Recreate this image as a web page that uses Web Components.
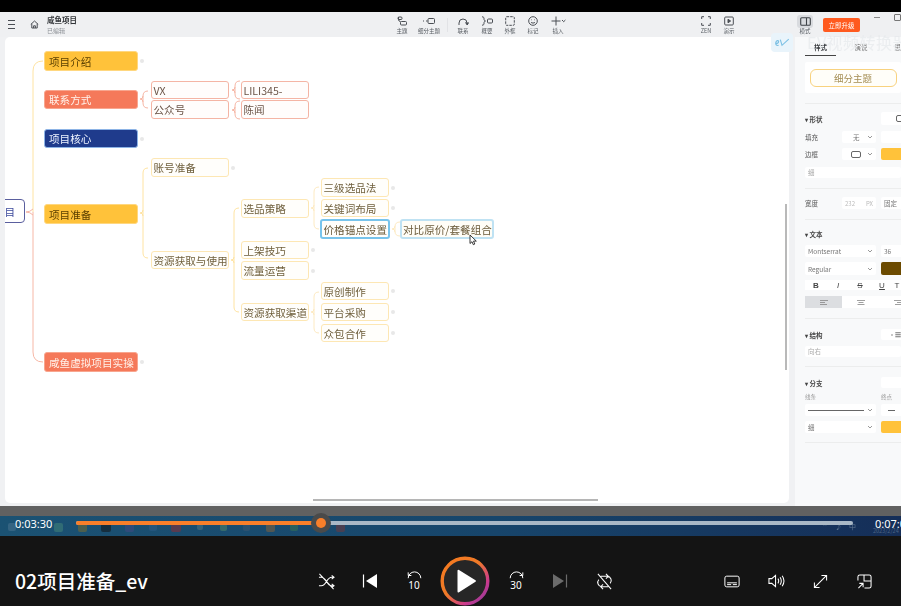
<!DOCTYPE html>
<html lang="zh">
<head>
<meta charset="utf-8">
<title>02项目准备_ev</title>
<style>
html, body { margin: 0; background: #000; }
body { width: 901px; height: 606px; overflow: hidden; font-family: "Noto Sans CJK SC", "Noto Sans", sans-serif; }
</style>
</head>
<body>

<app-window>
  <tool-bar slot="toolbar"></tool-bar>
  <mind-map slot="canvas">
    <map-node kind="root" x="-16" y="162" w="36" h="24">项目</map-node>
    <map-node kind="yellow" x="39" y="14" w="94" h="20" dot>项目介绍</map-node>
    <map-node kind="red" x="39" y="53" w="94" h="19">联系方式</map-node>
    <map-node kind="navy" x="39" y="92" w="94" h="19" dot>项目核心</map-node>
    <map-node kind="yellow" x="39" y="167" w="94" h="20">项目准备</map-node>
    <map-node kind="red" x="39" y="315" w="94" h="20" dot>咸鱼虚拟项目实操</map-node>
    <map-node kind="redline" x="146" y="44" w="78" h="18">VX</map-node>
    <map-node kind="redline" x="146" y="63" w="78" h="19">公众号</map-node>
    <map-node kind="redline" x="236" y="44" w="68" h="18">LILI345-</map-node>
    <map-node kind="redline" x="236" y="63" w="68" h="19">陈闻</map-node>
    <map-node x="146" y="121" w="78" h="19" dot>账号准备</map-node>
    <map-node x="146" y="214" w="78" h="18">资源获取与使用</map-node>
    <map-node x="236" y="162" w="68" h="19">选品策略</map-node>
    <map-node x="236" y="204" w="68" h="18" dot>上架技巧</map-node>
    <map-node x="236" y="224" w="68" h="19" dot>流量运营</map-node>
    <map-node x="236" y="266" w="68" h="18">资源获取渠道</map-node>
    <map-node x="316" y="141" w="68" h="19" dot>三级选品法</map-node>
    <map-node x="316" y="162" w="68" h="18" dot>关键词布局</map-node>
    <map-node kind="picked" x="315" y="182" w="70" h="20">价格锚点设置</map-node>
    <map-node kind="hover" x="395" y="182" w="94" h="20">对比原价/套餐组合</map-node>
    <map-node x="316" y="245" w="68" h="18" dot>原创制作</map-node>
    <map-node x="316" y="266" w="68" h="18" dot>平台采购</map-node>
    <map-node x="316" y="287" w="68" h="18" dot>众包合作</map-node>
  </mind-map>
  <style-panel slot="panel"></style-panel>
</app-window>

<video-player title-text="02项目准备_ev"></video-player>

<script>
// one toolbar button: icon in the slot, small label below
class ToolBtn extends HTMLElement {
  connectedCallback() {
    const root = this.attachShadow({ mode: 'open' })
    root.innerHTML = `
    <style>
      :host { display: flex; flex-direction: column; align-items: center; width: 23px; flex: none; }
      .ico { height: 13px; display: flex; align-items: center; justify-content: center; }
      .lbl { font-size: 5.5px; line-height: 8px; color: #555a60; white-space: nowrap; margin-top: -1px; }
      :host([on]) .ico { background: #d9dbdf; border-radius: 3px; width: 16px; }
    </style>
    <div class="ico"><slot></slot></div>
    <div class="lbl">${this.getAttribute('label')}</div>`
  }
}
customElements.define('tool-btn', ToolBtn)

class ToolBar extends HTMLElement {
  connectedCallback() {
    const s = 'fill="none" stroke="#4a4e54" stroke-width="1"'
    const root = this.attachShadow({ mode: 'open' })
    root.innerHTML = `
    <style>
      :host { display: flex; align-items: center; height: 25px; background: #eff0f2; position: relative; }
      .menu { margin-left: 8px; width: 8px; height: 7px; border-top: 1px solid #4a4e54; border-bottom: 1px solid #4a4e54; position: relative; }
      .menu::after { content: ""; position: absolute; left: 0; right: 0; top: 3px; height: 1px; background: #4a4e54; }
      .home { margin-left: 15px; display: flex; }
      .title { margin-left: 8px; width: 343.5px; display: flex; flex-direction: column; margin-top: -1px; flex: none; }
      .title b { font-size: 7.5px; line-height: 11px; color: #33363a; }
      .title span { font-size: 6px; line-height: 9px; color: #8b8f95; margin-top: 1px; }
      .div { width: 1px; height: 14px; background: #e2e3e6; margin: 0 3.5px 0 2.5px; flex: none; }
      .gap { width: 123px; flex: none; }
      .gap2 { width: 53px; flex: none; }
      .buy { margin-left: 6.5px; width: 37px; height: 14px; border-radius: 2px; background: #ff5a1f; color: #fff; font-size: 6.5px; line-height: 14px; text-align: center; flex: none; }
      .ctl { margin-left: 14px; width: 6px; height: 1px; background: #888; flex: none; margin-top: -14px; }
      .ctl.sq { margin-left: 14px; width: 5px; height: 5px; background: none; border: 1px solid #777; border-radius: 1px; }
    </style>
    <div class="menu"></div>
    <div class="home"><svg width="9" height="9" viewBox="0 0 9 9" ${s}><path d="M.8 4.4 4.5 1l3.7 3.4M1.8 3.800V8h5.400V3.800M3.600 8V5.800h1.800V8"/></svg></div>
    <div class="title"><b>咸鱼项目</b><span>已编辑</span></div>
    <tool-btn label="主题"><svg width="10" height="10" viewBox="0 0 10 10" ${s}><rect x="3.500" y="5.500" width="6" height="3.500" rx="1"/><path d="M1.500 1v2.500a2 2 0 0 0 2 2"/><rect x="1" y="1" width="4" height="2.500" rx="1"/></svg></tool-btn>
    <tool-btn label="细分主题" style="width:31px"><svg width="12" height="8" viewBox="0 0 12 8" ${s}><rect x="5" y="1.500" width="6.500" height="5" rx="1"/><path d="M0 4h1M3 4h1.500"/></svg></tool-btn>
    <div class="div"></div>
    <tool-btn label="联系"><svg width="11" height="9" viewBox="0 0 11 9" ${s}><path d="M1 8V6a4 4 0 0 1 8 0"/><path d="M7.500 5.500 9.200 8l1.500-2.500" fill="#4a4e54"/></svg></tool-btn>
    <tool-btn label="概要" style="margin-left:1px"><svg width="12" height="10" viewBox="0 0 12 10" ${s}><path d="M1 .8c2 0 2 1 2 2.200 0 1 .5 2 1.500 2C3.500 5 3 6 3 7c0 1.200 0 2.200-2 2.200"/><rect x="6.500" y="3" width="5" height="4" rx="1"/></svg></tool-btn>
    <tool-btn label="外框"><svg width="10" height="10" viewBox="0 0 10 10" ${s}><rect x=".7" y=".7" width="8.600" height="8.600" rx="1" stroke-dasharray="2.500 1"/></svg></tool-btn>
    <tool-btn label="标记"><svg width="10" height="10" viewBox="0 0 10 10" ${s}><circle cx="5" cy="5" r="4.300"/><path d="M3 6.300c1 1 3 1 4 0M3.200 3.800h.6M6.200 3.800h.6"/></svg></tool-btn>
    <tool-btn label="插入" style="width:27px"><svg width="15" height="10" viewBox="0 0 15 10" ${s}><path d="M5 .5v9M.5 5h9M11 4l1.700 1.700L14.400 4"/></svg></tool-btn>
    <div class="gap"></div>
    <tool-btn label="ZEN"><svg width="10" height="10" viewBox="0 0 10 10" ${s}><path d="M.7 3V.7H3M7 .7h2.300V3M9.300 7v2.300H7M3 9.300H.7V7"/></svg></tool-btn>
    <tool-btn label="演示"><svg width="10" height="10" viewBox="0 0 10 10" ${s}><rect x=".7" y="1" width="8.600" height="8" rx="1"/><path d="M4 3.200 6.600 5 4 6.800z" fill="#4a4e54"/></svg></tool-btn>
    <div class="gap2"></div>
    <tool-btn label="模式" on><svg width="11" height="9" viewBox="0 0 11 9" fill="none" stroke="#3f4348" stroke-width="1.100"><rect x=".7" y=".7" width="9.600" height="7.600" rx="1"/><path d="M6.500 1v7"/></svg></tool-btn>
    <div class="buy">立即升级</div>
    <div class="ctl"></div>
    <div class="ctl sq"></div>`
  }
}
customElements.define('tool-bar', ToolBar)

// a node on the mind map; its place on the canvas comes from the attributes
class MapNode extends HTMLElement {
  connectedCallback() {
    this.style.left = this.getAttribute('x') + 'px'
    this.style.top = this.getAttribute('y') + 'px'
    this.style.width = this.getAttribute('w') + 'px'
    this.style.height = this.getAttribute('h') + 'px'
    const root = this.attachShadow({ mode: 'open' })
    root.innerHTML = `
    <style>
      :host { position: absolute; box-sizing: border-box; display: flex; align-items: center; padding-left: 1.500px;
        font-size: 10.600px; white-space: nowrap; color: #6f5f3c; background: #fffefb;
        border: 1px solid #fde7b4; border-radius: 3px; }
      :host([kind=yellow]), :host([kind=red]), :host([kind=navy]) { padding-left: 4px; border: 1px solid; }
      :host([kind=yellow]) { background: #ffc23a; border-color: #ffd77f; color: #5b4000; }
      :host([kind=red]) { background: #f5795a; border-color: #f8a68f; color: #fff2ea; }
      :host([kind=navy]) { background: #1f3b8c; border-color: #8db4e6; color: #eef3ff; }
      :host([kind=redline]) { border-color: #f4b5a5; color: #6b5548; background: #fffdfc; }
      :host([kind=root]) { background: #fff; border: 1px solid #5a5f9e; color: #3c4a9c; border-radius: 4px; justify-content: flex-end; padding: 0 9px 0 0; }
      :host([kind=picked]) { border: 2px solid #78c4ec; padding-left: 1.500px; color: #6a5a3a; }
      :host([kind=hover]) { border: 2px solid #bfe2f3; background: #fffdf6; padding-left: 1px; color: #6a5a3a; }
      .dot { position: absolute; right: -7px; top: 50%; margin-top: -2px; width: 4px; height: 4px; border-radius: 50%; background: #e8e8e8; }
    </style>
    <slot></slot>${this.hasAttribute('dot') ? '<span class="dot"></span>' : ''}`
  }
}
customElements.define('map-node', MapNode)

// curly connector: spine at x from y1 to y2, short stub toward the parent at mid
function bracket(x, y1, y2, mid, color) {
  const r = Math.min(5, (y2 - y1) / 3)
  return `<path stroke="${color}" d="M${x + 5} ${y1}Q${x} ${y1} ${x} ${y1 + r}V${y2 - r}Q${x} ${y2} ${x + 5} ${y2}"/>` +
    `<path stroke="${color}" d="M${x - 3} ${mid}Q${x} ${mid} ${x} ${mid - 3}M${x - 3} ${mid}Q${x} ${mid} ${x} ${mid + 3}"/>`
}

class MindMap extends HTMLElement {
  connectedCallback() {
    const yellow = '#fee3a2', pale = '#fdeac2', red = '#f6b7a6'
    const root = this.attachShadow({ mode: 'open' })
    root.innerHTML = `
    <style>
      :host { display: block; position: relative; width: 784px; height: 466px; background: #fff; border-radius: 5px; overflow: hidden; }
      svg { position: absolute; left: 0; top: 0; }
      .vbar { position: absolute; left: 780px; top: 167px; width: 2px; height: 166px; background: #b9b9b9; }
      .hbar { position: absolute; left: 308px; top: 462px; width: 285px; height: 2px; background: #b5b5b5; }
      .cursor { position: absolute; left: 464px; top: 197px; }
    </style>
    <svg width="784" height="466" fill="none" stroke-width="1">
      <path stroke="${yellow}" d="M38 24Q28 24 28 34V175"/>
      <path stroke="${red}" d="M28 175V315Q28 325 38 325"/>
      <path stroke="${red}" d="M21 175Q25 175 28 172M21 175Q25 175 28 178"/>
      ${bracket(138, 54, 71, 62, red)}
      ${bracket(230, 44, 62, 53, red)}
      ${bracket(230, 64, 82, 73, red)}
      ${bracket(138, 131, 221, 176, yellow)}
      ${bracket(229, 171, 275, 223, yellow)}
      ${bracket(309, 150, 192, 171, pale)}
      ${bracket(309, 255, 296, 275, pale)}
      ${bracket(390, 185, 199, 192, pale)}
    </svg>
    <slot></slot>
    <div class="vbar"></div>
    <div class="hbar"></div>
    <svg class="cursor" width="9" height="12" viewBox="0 0 9 12"><path d="M1 1v8.500l2-1.800 1.300 3 1.500-.7-1.300-2.900h2.800z" fill="#fff" stroke="#222" stroke-width=".9"/></svg>`
  }
}
customElements.define('mind-map', MindMap)

class StylePanel extends HTMLElement {
  connectedCallback() {
    const chev = '<svg width="6" height="4" viewBox="0 0 6 4" fill="none" stroke="#999"><path d="M1 1l2 2 2-2"/></svg>'
    const lines = w => `<svg width="8" height="5" viewBox="0 0 8 5" stroke="#888" stroke-width=".8"><path d="${w}"/></svg>`
    const root = this.attachShadow({ mode: 'open' })
    root.innerHTML = `
    <style>
      :host { display: block; width: 106px; margin-left: 6px; height: 469px; background: #f8f9fa; overflow: hidden; box-sizing: border-box; padding-left: 10px; color: #555; font-size: 6.500px; }
      .inner { width: 130px; }
      .tabs { display: flex; height: 19px; align-items: center; font-size: 6.500px; color: #777; }
      .tabs span { width: 40px; text-align: center; flex: none; }
      .tabs .on { box-sizing: border-box; width: 31px; height: 19px; line-height: 20px; color: #33363a; font-weight: 700; margin-right: 5px; border-bottom: 1.500px solid #444; }
      .card { margin-top: 6px; height: 31px; width: 96px; background: #fff; display: flex; align-items: center; justify-content: center; border-radius: 2px; }
      .theme { box-sizing: border-box; width: 87px; height: 18px; border: 1px solid #f8d27f; border-radius: 6px; font-size: 9.500px; color: #a58e54; display: flex; align-items: center; justify-content: center; background: #fffef9; }
      hr { border: 0; height: 1px; background: #eceded; margin: 0; width: 96px; }
      .row { display: grid; align-items: center; height: 12px; width: 116px; grid-template-columns: 37px 34px 5px 40px; }
      .f { background: #fff; border-radius: 2px; height: 100%; display: flex; align-items: center; justify-content: space-between; padding: 0 3px; box-sizing: border-box; color: #777; font-size: 6.500px; }
      .wide { grid-column: 1 / 3; }
      .right { grid-column: 4; }
      .swatch { grid-column: 4; height: 100%; border-radius: 2px; }
      .full { width: 96px; height: 11px; background: #fff; color: #aaa; font-size: 6.500px; line-height: 11px; padding-left: 3px; box-sizing: border-box; border-radius: 2px; }
      b.h { font-weight: 700; color: #444; grid-column: 1 / 3; }
      b.h::before { content: "▾ "; font-size: 6px; }
      .shape { display: inline-block; width: 8px; height: 5px; border: 1px solid #666; border-radius: 2px; }
      .fmt { display: flex; width: 96px; height: 10px; background: #fff; align-items: center; font-size: 8px; color: #444; overflow: hidden; font-family: "Liberation Sans", sans-serif; }
      .fmt span { width: 22px; text-align: center; flex: none; }
      .fmt span:last-child { width: 8px; }
      .seg { display: flex; width: 96px; height: 12px; background: #fff; overflow: hidden; }
      .seg span { width: 37px; display: flex; justify-content: center; align-items: center; flex: none; }
      .seg span:first-child { background: #dcdee1; }
      .small { height: 7px; font-size: 5.500px; color: #999; line-height: 7px; }
      .line { display: block; flex: 1; height: 1px; background: #666; margin-right: 3px; }
    </style>
    <div class="inner">
      <div class="tabs"><span class="on">样式</span><span>演说</span><span>思维</span></div>
      <div class="card"><div class="theme">细分主题</div></div>
      <hr style="margin-top:10px">

      <div class="row" style="margin-top:8px;height:13px"><b class="h">形状</b><div class="f right" style="justify-content:center"><span class="shape"></span></div></div>
      <div class="row" style="margin-top:6px"><span>填充</span><div class="f"><span style="margin-left:8px">无</span>${chev}</div><span></span><div class="f"></div></div>
      <div class="row" style="margin-top:5px"><span>边框</span><div class="f"><span class="shape" style="margin-left:6px"></span>${chev}</div><span></span><div class="swatch" style="background:#ffc23a"></div></div>
      <div class="full" style="margin-top:7px">细</div>
      <hr style="margin-top:10px">

      <div class="row" style="margin-top:8px"><span>宽度</span><div class="f" style="color:#bbb;font-size:6px"><span>232</span><span>PX</span></div><span></span><div class="f">固定</div></div>
      <hr style="margin-top:10px">

      <div class="row" style="margin-top:8px"><b class="h">文本</b></div>
      <div class="row" style="margin-top:5px"><div class="f wide"><span>Montserrat</span>${chev}</div><span></span><div class="f">36</div></div>
      <div class="row" style="margin-top:5px;height:13px"><div class="f wide"><span>Regular</span>${chev}</div><span></span><div class="swatch" style="background:#6b4a00"></div></div>
      <div class="fmt" style="margin-top:5px"><span><b>B</b></span><span><em>I</em></span><span><s>S</s></span><span><u>U</u></span><span>T</span></div>
      <div class="seg" style="margin-top:6px"><span>${lines('M0 .5h8M0 2.500h5M0 4.500h7')}</span><span>${lines('M0 .5h8M1.500 2.500h5M.5 4.500h7')}</span><span>${lines('M0 .5h8M3 2.500h5M1 4.500h7')}</span></div>
      <hr style="margin-top:10px">

      <div class="row" style="margin-top:10px;height:11px"><b class="h">结构</b><div class="f right" style="padding:0 0 0 8px;justify-content:flex-start;font-size:6px">◦☰</div></div>
      <div class="full" style="margin-top:6px">向右</div>
      <hr style="margin-top:9px">

      <div class="row" style="margin-top:10px;height:11px"><b class="h">分支</b><div class="f right"></div></div>
      <div class="row small" style="margin-top:6px"><span style="grid-column:1 / 3">线条</span><span></span><span>终点</span></div>
      <div class="row" style="margin-top:3px"><div class="f wide"><span class="line"></span>${chev}</div><span></span><div class="f"><span class="line" style="flex:none;width:7px;margin-left:4px"></span></div></div>
      <div class="row" style="margin-top:5px"><div class="f wide"><span>细</span>${chev}</div><span></span><div class="swatch" style="background:#ffc23a"></div></div>
      <hr style="margin-top:9px">
    </div>`
  }
}
customElements.define('style-panel', StylePanel)

class AppWindow extends HTMLElement {
  connectedCallback() {
    const root = this.attachShadow({ mode: 'open' })
    root.innerHTML = `
    <style>
      :host { display: block; position: relative; width: 901px; height: 506px; background: #000; overflow: hidden; filter: blur(.45px); }
      .black { height: 12px; background: #000; }
      .main { display: flex; height: 469px; background: #f0f1f3; padding-left: 5px; }
      .mark { position: absolute; left: 771px; top: 33px; display: flex; align-items: center; pointer-events: none; }
      .logo { width: 22px; height: 19px; border-radius: 4px; background: #e9f4fb; display: flex; align-items: center; justify-content: center; }
      .mark span { margin-left: 14px; font-size: 16px; line-height: 19px; letter-spacing: .5px; color: rgba(226,230,234,.6); white-space: nowrap; }
    </style>
    <div class="black"></div>
    <slot name="toolbar"></slot>
    <div class="main">
      <slot name="canvas"></slot>
      <slot name="panel"></slot>
    </div>
    <div class="mark">
      <div class="logo"><svg width="16" height="9" viewBox="0 0 14 8" fill="none" stroke="#7cc0e4" stroke-width="1"><path d="M1 5c2 0 3-1 3-2S2 2 1.500 4 2 7 4 6.500M5.500 1.500 7 6.500 13 1"/></svg></div>
      <span>EV视频转换器</span>
    </div>`
  }
}
customElements.define('app-window', AppWindow)

class VideoPlayer extends HTMLElement {
  connectedCallback() {
    const w = 'fill="none" stroke="#fff" stroke-width="1.100"'
    // dock icons of the recorded desktop, one 23.5px slot each; none for empty slots
    const tray = ['#46708c:8', 'none:8', '#3f7f78:9', '#6f6a35:9', '#14191d:10', '#3f4a80:9', '#2a5a85:8', '#84303a:10', '#4a7080:6', '#4a806a:7', '#3a5570:7', '#7a6040:9', '#357055:8', 'none:8', '#6a3a40:9']
    const root = this.attachShadow({ mode: 'open' })
    root.innerHTML = `
    <style>
      :host { display: block; position: relative; width: 901px; height: 100px; background: #141414; color: #fff; overflow: hidden; }
      .grey { height: 10px; background: #616161; }
      .task { position: relative; height: 20px; background: linear-gradient(90deg, #1b5273, #17456b 55%, #152e58); display: flex; align-items: flex-start; padding: 0 0 0 15px; box-sizing: border-box; }
      .tray { position: absolute; left: 0; top: 5px; height: 12px; display: flex; align-items: center; filter: blur(.7px); opacity: .6; }
      .tray span { width: 23.500px; display: flex; justify-content: center; flex: none; }
      .tray i { display: block; border-radius: 2px; }
      .sys { position: absolute; left: 822px; top: 5px; display: flex; gap: 7px; font-size: 7px; line-height: 10px; color: #5f7692; filter: blur(.3px); }
      .date { position: absolute; left: 873px; top: 12px; font-size: 5.500px; line-height: 7px; color: #4d6585; white-space: nowrap; }
      .time { position: relative; font-family: "Noto Sans", sans-serif; font-size: 11px; line-height: 14px; margin-top: 1px; width: 61px; flex: none; white-space: nowrap; }
      .track { position: relative; width: 777px; height: 3.500px; margin-top: 5px; background: #a9b8c6; border-radius: 2px; flex: none; }
      .done { width: 245px; height: 100%; background: #f97f2a; border-radius: 2px; }
      .knob { position: absolute; left: 235px; top: -8.250px; width: 20px; height: 20px; border-radius: 50%; background: #4a4a4a; }
      .knob::after { content: ""; position: absolute; left: 5px; top: 5px; width: 10px; height: 10px; border-radius: 50%; background: #f97f2a; }
      .end { margin-left: 22px; }
      .bar { display: flex; align-items: center; height: 70px; box-sizing: border-box; padding-top: 20px; }
      .name { width: 289px; padding-left: 15px; font-size: 19.500px; font-weight: 500; white-space: nowrap; flex: none; margin-top: -1px; }
      .group { display: flex; align-items: center; }
      .btn { width: 44px; height: 44px; display: flex; align-items: center; justify-content: center; flex: none; position: relative; }
      .jump { position: absolute; left: 0; right: 0; top: 21px; text-align: center; font-family: "Noto Sans", sans-serif; font-size: 10px; line-height: 11px; }
      .play { width: 58px; height: 58px; display: flex; align-items: center; justify-content: center; flex: none; }
      .spacer { width: 84px; flex: none; }
    </style>
    <div class="grey"></div>
    <div class="task">
      <div class="tray">${tray.map(t => { const [c, s] = t.split(':'); return `<span><i style="width:${s}px;height:${s}px;background:${c}"></i></span>` }).join('')}</div>
      <div class="sys"><span>⌃</span><span>♪</span><span>中</span></div>
      <div class="date">2023/2/24</div>
      <div class="time">0:03:30</div>
      <div class="track"><div class="done"></div><div class="knob"></div></div>
      <div class="time end">0:07:04</div>
    </div>
    <div class="bar">
      <div class="name">${this.getAttribute('title-text')}</div>
      <div class="group">
        <div class="btn"><svg width="17" height="17" viewBox="0 0 18 18" ${w}><path d="M1 4.500h2.500c2.500 0 4 2 5.500 4.500s3 4.500 5.500 4.500H17M1 13.500h2.500c2.500 0 4-2 5.500-4.500s3-4.500 5.500-4.500H17M14.500 2.500l2.500 2-2.500 2M14.500 11.500l2.500 2-2.500 2M1.500 1l15 16"/></svg></div>
        <div class="btn"><svg width="16" height="16" viewBox="0 0 16 16"><path d="M15 1v14L4 8z" fill="#fff"/><path d="M1.500 1.500v13" stroke="#fff" stroke-width="1.200"/></svg></div>
        <div class="btn"><svg width="15" height="9" viewBox="0 0 16 10" style="margin-top:-12px" ${w}><path d="M1 8a7 7 0 0 1 14 0M1 1.500V5h3.500"/></svg><span class="jump">10</span></div>
        <div class="play"><svg width="50" height="50" viewBox="0 0 50 50">
          <defs><linearGradient id="ring" x1="0" y1="0" x2="1" y2="1"><stop offset="0" stop-color="#f57a1f"/><stop offset=".45" stop-color="#ef7a28"/><stop offset=".75" stop-color="#cc3a8e"/><stop offset="1" stop-color="#7d3a9e"/></linearGradient></defs>
          <circle cx="25" cy="25" r="22.800" fill="#262626" stroke="url(#ring)" stroke-width="3.400"/>
          <path d="M17.500 14.500v21a1 1 0 0 0 1.500.8l16.500-10.500a1 1 0 0 0 0-1.600L19 14a1 1 0 0 0-1.500.500z" fill="#fff"/>
        </svg></div>
        <div class="btn"><svg width="15" height="9" viewBox="0 0 16 10" style="margin-top:-12px" ${w}><path d="M15 8A7 7 0 0 0 1 8M15 1.500V5h-3.500"/></svg><span class="jump">30</span></div>
        <div class="btn"><svg width="16" height="16" viewBox="0 0 16 16"><path d="M1 1v14l11-7z" fill="#6b6b6b"/><path d="M14.500 1.500v13" stroke="#6b6b6b" stroke-width="1.200"/></svg></div>
        <div class="btn"><svg width="17" height="17" viewBox="0 0 18 18" ${w}><path d="M5 3.500h7a4.500 4.500 0 0 1 3 7.500M13 14.500H6A4.500 4.500 0 0 1 3 7M10.500 1l2.500 2.500L10.500 6M7.500 12l-2.500 2.500L7.500 17M2 1l14 16"/></svg></div>
      </div>
      <div class="spacer"></div>
      <div class="group">
        <div class="btn"><svg width="16" height="13" viewBox="0 0 18 14" ${w}><rect x="1" y="1" width="16" height="12" rx="2"/><path d="M3.500 8.500h11M3.500 10.500h4.500M10 10.500h4.500"/></svg></div>
        <div class="btn"><svg width="17" height="14" viewBox="0 0 18 14" ${w}><path d="M1 4.500h3L8 1v12L4 9.500H1zM10.500 4.500c1 1.500 1 3.500 0 5M12.800 3c1.600 2.500 1.600 5.500 0 8M15 1.500c2.300 3.300 2.300 7.700 0 11"/></svg></div>
        <div class="btn"><svg width="15" height="15" viewBox="0 0 16 16" ${w}><path d="M1.500 14.500l13-13M9 1.500h5.500V7M7 14.500H1.500V9"/></svg></div>
        <div class="btn"><svg width="15" height="15" viewBox="0 0 16 16" ${w}><path d="M1 7V3a2 2 0 0 1 2-2h10a2 2 0 0 1 2 2v10a2 2 0 0 1-2 2H8M7.500 1v6.500H15M1.500 15l5-5M2.500 10h4v4"/></svg></div>
      </div>
    </div>`
  }
}
customElements.define('video-player', VideoPlayer)
</script>
</body>
</html>
